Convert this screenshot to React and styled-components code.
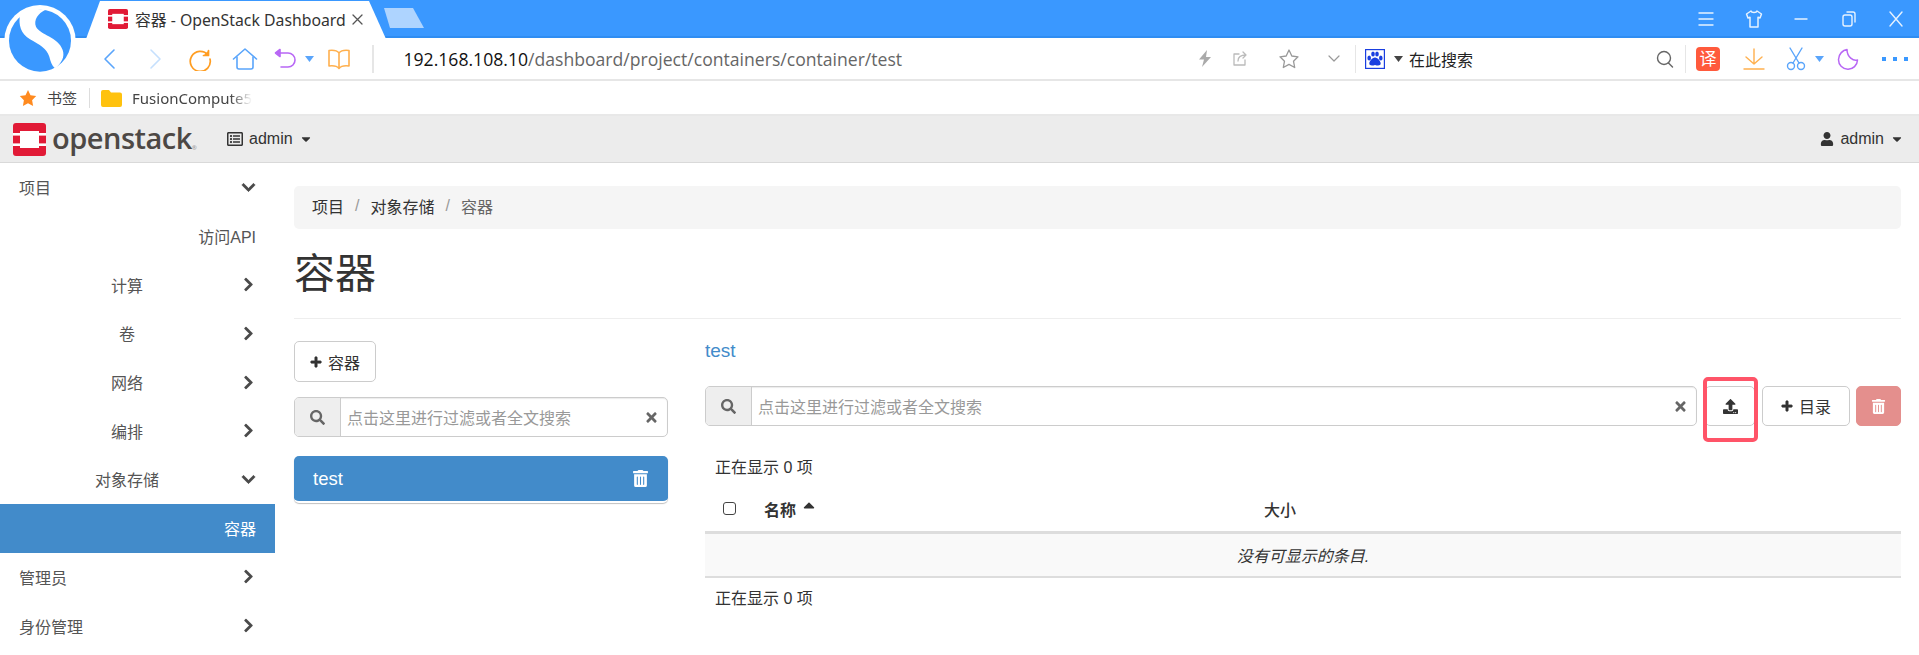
import styled, { createGlobalStyle } from "styled-components";
import {
  FaCaretDown,
  FaCaretUp,
  FaChevronDown,
  FaChevronRight,
  FaPlus,
  FaRegListAlt,
  FaSearch,
  FaTimes,
  FaTrashAlt,
  FaUpload,
  FaUser,
} from "react-icons/fa";

const GlobalStyle = createGlobalStyle`
  html, body {
    margin: 0;
    height: 655px;
    overflow: hidden;
    background: #fff;
    font-family: "Liberation Sans", "Noto Sans CJK SC", sans-serif;
    font-size: 16px;
    color: #333;
  }
  * { box-sizing: border-box; }
`;

const Page = styled.div`
  position: relative;
  width: 1919px;
  height: 655px;
  overflow: hidden;
`;

/* browser chrome */
const BrowserLogo = styled.svg`
  position: absolute;
  left: 0;
  top: 0;
  z-index: 2;
`;

const TitleBar = styled.div`
  height: 38px;
  background: #3a98ff;
  border-bottom: 2px solid #2f8df2;
  display: flex;
  align-items: flex-start;
  padding-left: 86px;
`;

const Tab = styled.div`
  width: 300px;
  height: 38px;
  margin-top: 1px;
  background: #fff;
  clip-path: polygon(0 100%, 14px 0, 283px 0, 100% 100%);
  display: flex;
  align-items: center;
  padding: 0 0 2px 22px;
  font-family: "Noto Sans", "Noto Sans CJK SC", sans-serif;
  font-size: 15.8px;
  color: #333;
  white-space: nowrap;
`;

const TabTitle = styled.span`
  margin-left: 7px;
  width: 216px;
`;

const NewTab = styled.div`
  width: 40px;
  height: 20px;
  margin: 8px 0 0 -2px;
  background: #aed4ff;
  clip-path: polygon(0 0, 29px 0, 100% 100%, 6px 100%);
`;

const WindowControls = styled.div`
  margin-left: auto;
  display: flex;
  align-items: center;
  height: 37px;
`;

const Slot = styled.div`
  width: ${(p) => p.$w}px;
  flex: none;
  display: flex;
  align-items: center;
  justify-content: center;
  svg {
    flex: none;
  }
`;

const ToolBar = styled.div`
  height: 43px;
  background: #fff;
  border-bottom: 2px solid #e6e6e6;
  display: flex;
  align-items: center;
  padding-left: 87px;
`;

const ToolSep = styled.div`
  width: ${(p) => (p.$thin ? 1 : 2)}px;
  margin-left: ${(p) => p.$gap || 0}px;
  height: 28px;
  flex: none;
  background: #e6e6e6;
`;

const Address = styled.div`
  width: 791.5px;
  margin-left: 29.5px;
  flex: none;
  font-family: "Open Sans", "Noto Sans CJK SC", sans-serif;
  font-size: 17.6px;
  color: #666;
  white-space: nowrap;
  b {
    font-weight: 400;
    color: #111;
  }
`;

const EngineText = styled.div`
  flex: none;
  margin: 0 182px 0 7px;
  font-family: "Noto Sans CJK SC", sans-serif;
  font-size: 16px;
  color: #222;
`;

const Bookmarks = styled.div`
  height: 35px;
  background: #fff;
  border-bottom: 2px solid #e8e8e8;
  display: flex;
  align-items: center;
  padding-left: 19px;
  font-family: "Noto Sans", "Noto Sans CJK SC", sans-serif;
  font-size: 15px;
  color: #444;
`;

const BookmarkSep = styled.div`
  width: 1px;
  height: 20px;
  background: #ddd;
  margin: 0 11px 0 12px;
`;

const BookmarkLabel = styled.span`
  margin-left: 10px;
`;

const FadedLabel = styled.span`
  margin-left: 10px;
  width: 120px;
  overflow: hidden;
  white-space: nowrap;
  -webkit-mask-image: linear-gradient(to right, #000 82%, transparent 100%);
  mask-image: linear-gradient(to right, #000 82%, transparent 100%);
`;

/* dashboard navbar */
const NavBar = styled.div`
  height: 47px;
  background: #ececec;
  border-bottom: 1px solid #d9d9d9;
  display: flex;
  align-items: center;
  padding: 0 15px 0 13px;
  color: #333;
`;

const Brand = styled.div`
  display: flex;
  align-items: center;
  width: 214px;
  flex: none;
`;

const BrandName = styled.span`
  margin-left: 6px;
  font-family: "Open Sans", sans-serif;
  font-size: 29px;
  font-weight: 600;
  letter-spacing: -0.5px;
  line-height: 1;
  color: #4d4845;
  padding-bottom: 4px;
  sup {
    font-size: 6px;
    color: #999;
    vertical-align: -1px;
    letter-spacing: 0;
  }
`;

const NavMenu = styled.div`
  display: flex;
  align-items: center;
  gap: 6px;
  font-size: 16px;
  margin-left: ${(p) => (p.$right ? "auto" : "0")};
`;

const Body = styled.div`
  display: flex;
  height: 492px;
`;

const SideBar = styled.nav`
  width: 275px;
  flex: none;
  color: #555;
`;

const SideRow = styled.div`
  height: 48.7px;
  display: flex;
  align-items: center;
  padding-right: 18px;
  color: ${(p) => (p.$active ? "#fff" : "#555")};
  background: ${(p) => (p.$active ? "#428bca" : "transparent")};
  padding-left: ${(p) => (p.$level === 0 ? 19 : p.$level === 1 ? 15 : 0)}px;
`;

const SideLabel = styled.span`
  flex: 1;
  text-align: ${(p) => (p.$level === 0 ? "left" : p.$level === 1 ? "center" : "right")};
  padding-right: ${(p) => (p.$level === 2 ? 1 : 0)}px;
`;

const Chevron = styled.span`
  width: 18px;
  flex: none;
  display: flex;
  justify-content: center;
  font-size: 15px;
  color: #4a4a4a;
  svg {
    stroke: currentColor;
    stroke-width: 24;
  }
`;

const Main = styled.main`
  flex: 1;
  padding: 23px 18px 0 19px;
`;

const Breadcrumb = styled.div`
  height: 43px;
  background: #f5f5f5;
  border-radius: 5px;
  display: flex;
  align-items: center;
  padding: 0 0 3px 18px;
  color: #333;
`;

const Crumb = styled.span`
  color: ${(p) => (p.$current ? "#666" : "#333")};
`;

const CrumbSep = styled.span`
  color: #999;
  margin: 0 11px;
`;

const PageHeader = styled.div`
  height: 90px;
  border-bottom: 1px solid #eee;
  display: flex;
  align-items: center;
  padding-top: 3px;
`;

const PageTitle = styled.h1`
  margin: 0;
  font-size: 41px;
  font-weight: 400;
  color: #333;
  line-height: 1.1;
`;

const Columns = styled.div`
  display: flex;
  gap: 37px;
  margin-top: 22px;
`;

const LeftColumn = styled.div`
  width: 374px;
  flex: none;
`;

const RightColumn = styled.div`
  flex: 1;
`;

const Button = styled.div`
  height: 40px;
  width: ${(p) => p.$w}px;
  flex: none;
  border: 1px solid #ccc;
  border-radius: 5px;
  background: #fff;
  display: flex;
  align-items: center;
  justify-content: center;
  gap: 6px;
  color: #333;
  font-size: 16px;
`;

const AddButton = styled(Button)`
  height: 41px;
  margin-bottom: 15px;
`;

const DangerButton = styled(Button)`
  background: #e48f8d;
  border-color: #e48f8d;
  color: #fff;
`;

const PlusIcon = styled(FaPlus)`
  stroke: currentColor;
  stroke-width: 30;
`;

const SearchGroup = styled.div`
  height: 40px;
  width: ${(p) => p.$w}px;
  flex: none;
  display: flex;
  border: 1px solid #ccc;
  border-radius: 5px;
  overflow: hidden;
  box-shadow: inset 0 1px 1px rgba(0, 0, 0, 0.08);
`;

const SearchAddon = styled.div`
  width: 46px;
  flex: none;
  background: #eee;
  border-right: 1px solid #ccc;
  display: flex;
  align-items: center;
  justify-content: center;
  color: #666;
  font-size: 15px;
`;

const SearchText = styled.div`
  flex: 1;
  display: flex;
  align-items: center;
  justify-content: space-between;
  padding: 0 8px 0 6px;
  color: #999;
  font-size: 16px;
  svg {
    color: #666;
    font-size: 15px;
  }
`;

const ContainerItem = styled.div`
  height: 47px;
  margin-top: 19px;
  background: #428bca;
  border-radius: 5px;
  border-bottom: 2px solid #fff;
  box-shadow: 0 1px 1px rgba(0, 0, 0, 0.25);
  display: flex;
  align-items: center;
  justify-content: space-between;
  padding: 0 19px 0 19px;
  color: #fff;
  font-size: 18.5px;
  svg {
    font-size: 17px;
  }
`;

const ContainerName = styled.div`
  height: 45px;
  line-height: 20px;
  font-size: 19px;
  color: #428bca;
`;

const ActionRow = styled.div`
  display: flex;
  align-items: center;
`;

const UploadWrap = styled.div`
  position: relative;
  margin: 0 7px 0 8px;
`;

const Highlight = styled.div`
  position: absolute;
  left: -2px;
  top: -9px;
  width: 55px;
  height: 65px;
  border: 4px solid #ff5468;
  border-radius: 5px;
`;

const DeleteGap = styled.div`
  width: 6px;
  flex: none;
`;

const Status = styled.div`
  line-height: 22px;
  padding: 1px 0 0 10px;
  color: #333;
  margin-top: ${(p) => p.$top}px;
`;

const TableHead = styled.div`
  height: 46px;
  margin-top: 9px;
  padding: 0 0 2px 18px;
  border-bottom: 3px solid #ddd;
  display: flex;
  align-items: center;
  font-weight: 700;
  color: #333;
`;

const CheckBox = styled.span`
  width: 13px;
  height: 13px;
  flex: none;
  margin-right: 28px;
  border: 1.5px solid #444;
  border-radius: 3px;
  background: #fff;
`;

const NameHead = styled.div`
  width: 500px;
  display: flex;
  align-items: center;
  gap: 4px;
  svg {
    margin-bottom: 8px;
    font-size: 18px;
  }
`;

const SizeHead = styled.div`
  font-weight: 500;
`;

const EmptyRow = styled.div`
  height: 44px;
  background: #f9f9f9;
  border-bottom: 2px solid #ddd;
  display: flex;
  align-items: center;
  justify-content: center;
  font-style: italic;
  color: #333;
`;

/* hand drawn icons for the browser toolbar */
const Line = ({ w = 22, h = 22, vb = "0 0 22 22", color, sw = 1.6, children }) => (
  <svg
    width={w}
    height={h}
    viewBox={vb}
    fill="none"
    stroke={color}
    strokeWidth={sw}
    strokeLinecap="round"
    strokeLinejoin="round"
  >
    {children}
  </svg>
);

const OpenstackMark = ({ size }) => (
  <svg width={size} height={size} viewBox="0 0 33 33">
    <rect width="33" height="33" rx="3" fill="#e11a36" />
    <rect x="7" y="8" width="19" height="17" fill="#fff" />
    <rect x="0" y="10" width="33" height="2.6" fill="#fff" />
    <rect x="0" y="20.4" width="33" height="2.6" fill="#fff" />
  </svg>
);

const Caret = ({ color }) => (
  <svg width="9" height="6" viewBox="0 0 9 6">
    <path d="M0 0h9L4.500 6z" fill={color} />
  </svg>
);

const sideItems = [
  { label: "项目", level: 0, open: true },
  { label: "访问API", level: 2 },
  { label: "计算", level: 1, more: true },
  { label: "卷", level: 1, more: true },
  { label: "网络", level: 1, more: true },
  { label: "编排", level: 1, more: true },
  { label: "对象存储", level: 1, open: true },
  { label: "容器", level: 2, active: true },
  { label: "管理员", level: 0, more: true },
  { label: "身份管理", level: 0, more: true },
];

const App = () => {
  return (
    <Page>
      <GlobalStyle />
      <BrowserLogo width="90" height="80" viewBox="0 0 270 240">
        <circle cx="120" cy="122" r="107" fill="#fff" />
        <circle cx="120" cy="122" r="93" fill="#3a98ff" />
        <path
          d="M60 45C55 75 62 100 90 118c30 17 50 27 58 52 4 15 7 25 17 35 20-15 30-35 23-55C175 110 120 105 108 80c-8-20 7-40 27-50L80 24z"
          fill="#fff"
        />
      </BrowserLogo>

      <TitleBar>
        <Tab>
          <OpenstackMark size={20} />
          <TabTitle>容器 - OpenStack Dashboard</TabTitle>
          <Line w={13} h={13} vb="0 0 13 13" color="#555" sw={1.3}>
            <path d="M2 2l9 9M11 2l-9 9" />
          </Line>
        </Tab>
        <NewTab />
        <WindowControls>
          <Slot $w={48}>
            <Line w={18} h={16} vb="0 0 18 16" color="#e6f2ff" sw={1.4}>
              <path d="M2 2h14M2 8h14M2 14h14" />
            </Line>
          </Slot>
          <Slot $w={47}>
            <Line w={18} h={20} vb="0 0 18 20" color="#e6f2ff" sw={1.5}>
              <path d="M6 2 1.500 5l1.500 4 2-.8V18h8V8.200l2 .8 1.500-4L12 2c-.5 2-5.500 2-6 0z" />
            </Line>
          </Slot>
          <Slot $w={47}>
            <Line w={16} h={4} vb="0 0 16 4" color="#e6f2ff" sw={1.4}>
              <path d="M2 2h12" />
            </Line>
          </Slot>
          <Slot $w={49}>
            <Line w={16} h={18} vb="0 0 16 18" color="#e6f2ff" sw={1.4}>
              <rect x="2" y="5" width="9" height="11" rx="2" />
              <path d="M6 2h6a2 2 0 0 1 2 2v8" />
            </Line>
          </Slot>
          <Slot $w={46}>
            <Line w={16} h={18} vb="0 0 16 18" color="#e6f2ff" sw={1.4}>
              <path d="M2 2l12 14M14 2L2 16" />
            </Line>
          </Slot>
        </WindowControls>
      </TitleBar>

      <ToolBar>
        <Slot $w={45}>
          <Line w={14} h={22} vb="0 0 14 22" color="#5aa5fb">
            <path d="M11 2 2 11l9 9" />
          </Line>
        </Slot>
        <Slot $w={45}>
          <Line w={14} h={22} vb="0 0 14 22" color="#c6e0fd">
            <path d="M3 2l9 9-9 9" />
          </Line>
        </Slot>
        <Slot $w={45}>
          <Line w={24} h={24} vb="0 0 24 24" color="#ff9d21" sw={1.7}>
            <path d="M20 8A10 10 0 1 0 22 12" />
            <path d="M20.500 3.500V8.500H15.500" fill="#ff9d21" />
          </Line>
        </Slot>
        <Slot $w={45}>
          <Line w={26} h={24} vb="0 0 26 24" color="#5aa5fb" sw={1.6}>
            <path d="M1.500 12 13 2l11.500 10" />
            <path d="M5 10v10a2 2 0 0 0 2 2h12a2 2 0 0 0 2-2V10" />
          </Line>
        </Slot>
        <Slot $w={36}>
          <Line w={24} h={22} vb="0 0 24 22" color="#b867f5" sw={1.6}>
            <path d="M6 5h9a6.500 6.500 0 0 1 0 14H8" />
            <path d="M7 1.500 2.500 5 7 8.500z" fill="#b867f5" />
          </Line>
        </Slot>
        <Slot $w={13}>
          <Caret color="#5aa5fb" />
        </Slot>
        <Slot $w={46}>
          <Line w={24} h={22} vb="0 0 24 22" color="#ffb04e" sw={1.6}>
            <path d="M12 5C10 2.500 6 2 2 2.500V18c4-.5 8 0 10 2.500C14 18 18 17.500 22 18V2.500C18 2 14 2.500 12 5zM12 5v15" />
          </Line>
        </Slot>
        <ToolSep $gap={10} />
        <Address>
          <b>192.168.108.10</b>/dashboard/project/containers/container/test
        </Address>
        <Slot $w={20}>
          <svg width="14" height="17" viewBox="0 0 14 17">
            <path d="M9 0 1 9.500h5L4 17l9-10H8z" fill="#aaa" />
          </svg>
        </Slot>
        <Slot $w={50}>
          <Line w={16} h={16} vb="0 0 16 16" color="#bbb" sw={1.3}>
            <path d="M7 3H2v11h11V9M6 10c0-4 3-6 8-6M11 1l3 3-3 3" />
          </Line>
        </Slot>
        <Slot $w={48}>
          <Line w={22} h={22} vb="0 0 22 22" color="#999" sw={1.3}>
            <path d="M11 2l2.800 6 6.200.8-4.500 4.400 1.200 6.300L11 16.400 5.300 19.500l1.200-6.300L2 8.800 8.200 8z" />
          </Line>
        </Slot>
        <Slot $w={42}>
          <Line w={12} h={8} vb="0 0 12 8" color="#999" sw={1.2}>
            <path d="M1 1l5 5 5-5" />
          </Line>
        </Slot>
        <ToolSep $thin />
        <Slot $w={38}>
          <svg width="20" height="20" viewBox="0 0 20 20">
            <rect x=".6" y=".6" width="18.800" height="18.800" fill="#fff" stroke="#1a3fe0" strokeWidth="1.200" />
            <g fill="#1a3fe0">
              <ellipse cx="4.200" cy="9" rx="1.800" ry="2.500" />
              <ellipse cx="8" cy="5" rx="1.800" ry="2.600" />
              <ellipse cx="12" cy="5" rx="1.800" ry="2.600" />
              <ellipse cx="15.800" cy="9" rx="1.800" ry="2.500" />
              <path d="M10 8.500c-2.800 0-5.700 3.800-5.700 6 0 2.300 3 2.300 5.700 1.400 2.700.9 5.700.9 5.700-1.400 0-2.200-2.900-6-5.700-6z" />
            </g>
          </svg>
        </Slot>
        <Slot $w={8}>
          <Caret color="#444" />
        </Slot>
        <EngineText>在此搜索</EngineText>
        <Slot $w={20}>
          <Line w={20} h={20} vb="0 0 20 20" color="#666" sw={1.4}>
            <circle cx="9" cy="9" r="6.500" />
            <path d="M13.500 14l4 4" />
          </Line>
        </Slot>
        <Slot $w={10} />
        <ToolSep $thin />
        <Slot $w={44}>
          <svg width="24" height="24" viewBox="0 0 24 24">
            <rect width="24" height="24" rx="4" fill="#ff5a3c" />
            <text x="12" y="18" fontSize="17" fill="#fff" textAnchor="middle" fontFamily="Noto Sans CJK SC">
              译
            </text>
          </svg>
        </Slot>
        <Slot $w={47}>
          <Line w={22} h={22} vb="0 0 22 22" color="#ffb04e" sw={1.4}>
            <path d="M11 1v15M3 9l8 7 8-7M1 21h20" />
          </Line>
        </Slot>
        <Slot $w={38}>
          <Line w={20} h={24} vb="0 0 20 24" color="#5aa5fb" sw={1.4}>
            <path d="M4 1l9 15M16 1 7 16" />
            <circle cx="5" cy="19" r="3.500" />
            <circle cx="15" cy="19" r="3.500" />
          </Line>
        </Slot>
        <Slot $w={8}>
          <Caret color="#5aa5fb" />
        </Slot>
        <Slot $w={49}>
          <Line w={22} h={22} vb="0 0 22 22" color="#b867f5" sw={1.5}>
            <path d="M10 1.500C6 2 1.500 6 1.500 11.500a9.500 9.500 0 0 0 19 .5c-4 1.500-10.500-3-10.500-10.500z" />
          </Line>
        </Slot>
        <Slot $w={46}>
          <svg width="26" height="4" viewBox="0 0 26 4">
            <g fill="#3a98ff">
              <rect width="4" height="4" />
              <rect x="11" width="4" height="4" />
              <rect x="22" width="4" height="4" />
            </g>
          </svg>
        </Slot>
      </ToolBar>

      <Bookmarks>
        <svg width="18" height="18" viewBox="0 0 18 18">
          <path d="M9 1l2.500 5.300 5.700.8-4.100 4.100 1 5.800L9 14.200 3.900 17l1-5.800L.8 7.100l5.700-.8z" fill="#ff8a1f" />
        </svg>
        <BookmarkLabel>书签</BookmarkLabel>
        <BookmarkSep />
        <svg width="21" height="21" viewBox="0 0 21 21">
          <path d="M2 3h6l2 2.500h9a2 2 0 0 1 2 2V18a2 2 0 0 1-2 2H2a2 2 0 0 1-2-2V5a2 2 0 0 1 2-2z" fill="#ffc20e" />
        </svg>
        <FadedLabel>FusionCompute5</FadedLabel>
      </Bookmarks>

      <NavBar>
        <Brand>
          <OpenstackMark size={33} />
          <BrandName>
            openstack<sup>®</sup>
          </BrandName>
        </Brand>
        <NavMenu>
          <FaRegListAlt size={16} />
          <span>admin</span>
          <FaCaretDown size={14} />
        </NavMenu>
        <NavMenu $right>
          <FaUser size={14} />
          <span>admin</span>
          <FaCaretDown size={14} />
        </NavMenu>
      </NavBar>

      <Body>
        <SideBar>
          {sideItems.map((item) => (
            <SideRow key={item.label} $level={item.level} $active={item.active}>
              <SideLabel $level={item.level}>{item.label}</SideLabel>
              {item.open && (
                <Chevron>
                  <FaChevronDown />
                </Chevron>
              )}
              {item.more && (
                <Chevron>
                  <FaChevronRight />
                </Chevron>
              )}
            </SideRow>
          ))}
        </SideBar>

        <Main>
          <Breadcrumb>
            <Crumb>项目</Crumb>
            <CrumbSep>/</CrumbSep>
            <Crumb>对象存储</Crumb>
            <CrumbSep>/</CrumbSep>
            <Crumb $current>容器</Crumb>
          </Breadcrumb>
          <PageHeader>
            <PageTitle>容器</PageTitle>
          </PageHeader>

          <Columns>
            <LeftColumn>
              <AddButton $w={82}>
                <PlusIcon size={12} />
                容器
              </AddButton>
              <SearchGroup>
                <SearchAddon>
                  <FaSearch />
                </SearchAddon>
                <SearchText>
                  点击这里进行过滤或者全文搜索
                  <FaTimes />
                </SearchText>
              </SearchGroup>
              <ContainerItem>
                test
                <FaTrashAlt />
              </ContainerItem>
            </LeftColumn>

            <RightColumn>
              <ContainerName>test</ContainerName>
              <ActionRow>
                <SearchGroup $w={992}>
                  <SearchAddon>
                    <FaSearch />
                  </SearchAddon>
                  <SearchText>
                    点击这里进行过滤或者全文搜索
                    <FaTimes />
                  </SearchText>
                </SearchGroup>
                <UploadWrap>
                  <Button $w={50}>
                    <FaUpload size={15} />
                  </Button>
                  <Highlight />
                </UploadWrap>
                <Button $w={88}>
                  <PlusIcon size={12} />
                  目录
                </Button>
                <DeleteGap />
                <DangerButton $w={45}>
                  <FaTrashAlt size={15} />
                </DangerButton>
              </ActionRow>

              <Status $top={30}>正在显示 0 项</Status>
              <TableHead>
                <CheckBox />
                <NameHead>
                  名称
                  <FaCaretUp />
                </NameHead>
                <SizeHead>大小</SizeHead>
              </TableHead>
              <EmptyRow>没有可显示的条目.</EmptyRow>
              <Status $top={9}>正在显示 0 项</Status>
            </RightColumn>
          </Columns>
        </Main>
      </Body>
    </Page>
  );
};

export default App;
